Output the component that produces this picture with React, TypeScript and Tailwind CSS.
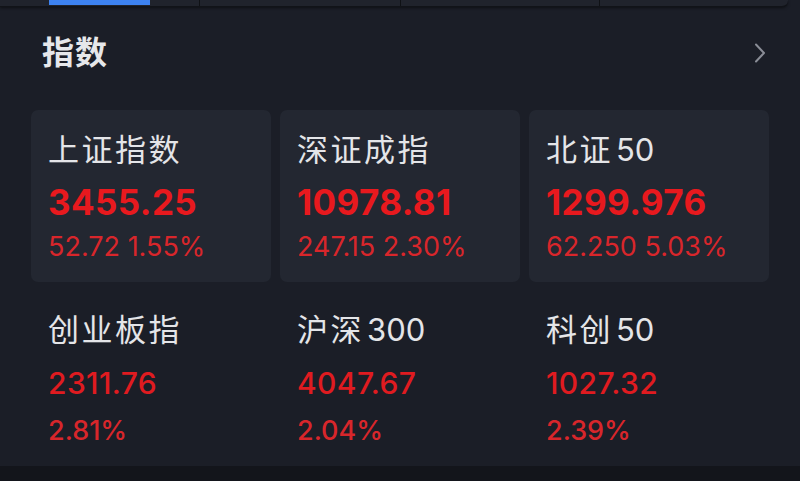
const font = { fontFamily: 'Inter, "Noto Sans CJK SC", sans-serif' };

interface IndexItem {
  name: string;
  num?: string;
  price: string;
  change?: string;
  pct: string;
}

const topRow: IndexItem[] = [
  { name: '上证指数', price: '3455.25', change: '52.72', pct: '1.55%' },
  { name: '深证成指', price: '10978.81', change: '247.15', pct: '2.30%' },
  { name: '北证', num: '50', price: '1299.976', change: '62.250', pct: '5.03%' },
];

const bottomRow: IndexItem[] = [
  { name: '创业板指', price: '2311.76', pct: '2.81%' },
  { name: '沪深', num: '300', price: '4047.67', pct: '2.04%' },
  { name: '科创', num: '50', price: '1027.32', pct: '2.39%' },
];

function Name({ item }: { item: IndexItem }) {
  return (
    <span className="text-[31px] leading-[40px] text-[#e4e5e8] whitespace-nowrap">
      <span className="tracking-[2.5px]">{item.name}</span>
      {item.num && <span className="ml-[3px]">{item.num}</span>}
    </span>
  );
}

function TabStrip() {
  return (
    <div className="relative h-[7px] w-[788px] rounded-br-[6px] bg-[#20232c] border-b border-[#111318] shadow-[0_1px_3px_rgba(0,0,0,0.5)]">
      <div className="absolute left-[49px] top-0 h-[5px] w-[101px] bg-[#3d82f0]" />
      <div className="absolute left-[199px] top-0 h-full w-px bg-[#0f1115]" />
      <div className="absolute left-[400px] top-0 h-full w-px bg-[#0f1115]" />
      <div className="absolute left-[599px] top-0 h-full w-px bg-[#0f1115]" />
    </div>
  );
}

export default function App() {
  return (
    <div className="w-[800px] h-[481px] bg-[#1b1e27] flex flex-col overflow-hidden" style={font}>
      <TabStrip />

      {/* Header */}
      <div className="flex items-center justify-between pl-[42px] pr-[34px] mt-[26px] h-[40px]">
        <span className="text-[32px] leading-[40px] font-bold tracking-[1px] text-[#e6e7ea]">指数</span>
        <svg width="12" height="20" viewBox="0 0 12 20" fill="none" stroke="#8a8d96" strokeWidth="2" strokeLinecap="round" strokeLinejoin="round">
          <path d="M2 1.5 L10 10 L2 18.5" />
        </svg>
      </div>

      {/* Cards */}
      <div className="grid grid-cols-3 gap-[9px] px-[31px] mt-[37px]">
        {topRow.map((item) => (
          <div key={item.name} className="h-[172px] rounded-[7px] bg-[#232731] pl-[17px] pt-[20px] flex flex-col">
            <Name item={item} />
            <span className="mt-[12px] text-[35px] leading-[40px] font-bold tracking-[0.4px] text-[#e8191e]">{item.price}</span>
            <span className="mt-[5px] text-[27px] leading-[40px] text-[#d8262b]">
              {item.change} {item.pct}
            </span>
          </div>
        ))}
      </div>

      {/* Plain row */}
      <div className="grid grid-cols-3 gap-[9px] px-[31px]">
        {bottomRow.map((item) => (
          <div key={item.name} className="pl-[17px] pt-[28px] flex flex-col">
            <Name item={item} />
            <span className="mt-[13px] text-[30px] leading-[40px] font-medium tracking-[0.4px] text-[#e01b20]">{item.price}</span>
            <span className="mt-[8px] text-[27px] leading-[40px] font-medium text-[#d8262b]">{item.pct}</span>
          </div>
        ))}
      </div>

      <div className="flex-1" />
      <div className="h-[15px] bg-[#13151b]" />
    </div>
  );
}
